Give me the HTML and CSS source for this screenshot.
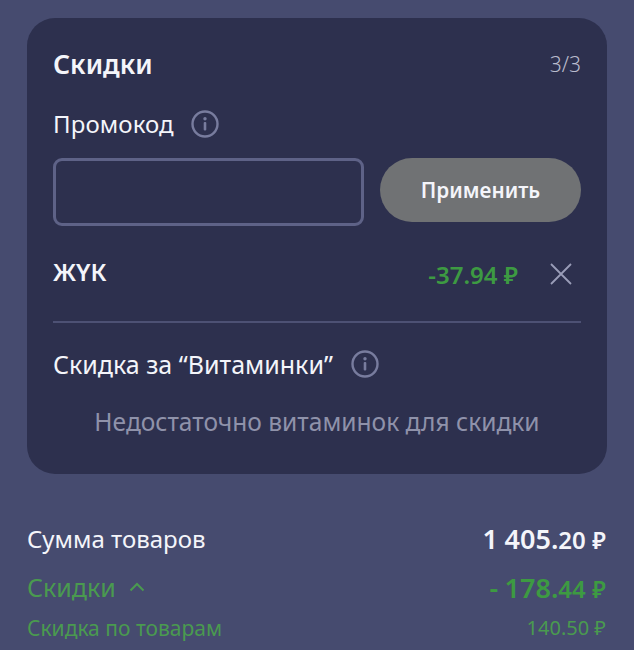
FILE: index.html
```html
<!DOCTYPE html>
<html lang="ru">
<head>
<meta charset="utf-8">
<title>Скидки</title>
<link rel="stylesheet" href="styles.css">
</head>
<body>
<main class="page">
  <section class="card">
    <div class="head">
      <h2 class="title">Скидки</h2>
      <span class="step">3/3</span>
    </div>
    <div class="label-row promo-label">
      <span class="label">Промокод</span>
      <svg class="info" viewBox="0 0 28 28" width="28" height="28"><circle cx="14" cy="14" r="12.5" fill="none" stroke="#787c9e" stroke-width="2.4"/><circle cx="14" cy="8.8" r="1.7" fill="#787c9e"/><rect x="12.7" y="12" width="2.6" height="8.6" rx="1" fill="#787c9e"/></svg>
    </div>
    <div class="promo-form">
      <input class="promo-input" type="text" aria-label="Промокод">
      <button class="apply" type="button">Применить</button>
    </div>
    <div class="coupon">
      <span class="coupon-name">ЖҮК</span>
      <span class="coupon-value">-37.94 ₽</span>
      <svg class="close" viewBox="0 0 24 24" width="24" height="24"><path d="M2 2 L22 22 M22 2 L2 22" stroke="#9a9db8" stroke-width="1.8" fill="none"/></svg>
    </div>
    <hr class="divider">
    <div class="label-row vit-label">
      <span class="label vit-text">Скидка за “Витаминки”</span>
      <svg class="info" viewBox="0 0 28 28" width="28" height="28"><circle cx="14" cy="14" r="12.5" fill="none" stroke="#787c9e" stroke-width="2.4"/><circle cx="14" cy="8.8" r="1.7" fill="#787c9e"/><rect x="12.7" y="12" width="2.6" height="8.6" rx="1" fill="#787c9e"/></svg>
    </div>
    <p class="note">Недостаточно витаминок для скидки</p>
  </section>
  <section class="totals">
    <div class="row sum">
      <span>Сумма товаров</span>
      <span class="amount">1 405.<span class="cents">20</span> <span class="rub">₽</span></span>
    </div>
    <div class="row discounts">
      <span class="disc-label">Скидки
        <svg class="chev" viewBox="0 0 16 10" width="16" height="10"><path d="M1.5 8.5 L8 2 L14.5 8.5" fill="none" stroke="#4a9a4f" stroke-width="2"/></svg>
      </span>
      <span class="amount">- 178.<span class="cents">44</span> <span class="rub">₽</span></span>
    </div>
    <div class="row sub">
      <span>Скидка по товарам</span>
      <span class="sub-value">140.50 ₽</span>
    </div>
  </section>
</main>
</body>
</html>
```
FILE: styles.css
```css
* { box-sizing: border-box; }
html, body { margin: 0; height: 100%; }
body {
  background: #464b6f;
  font-family: "Noto Sans", "Open Sans", sans-serif;
  color: #f4f5fa;
  overflow: hidden;
}
.page { padding: 18px 27px 0; }
.card {
  background: #2d304e;
  border-radius: 28px;
  height: 456px;
  padding: 26px 26px 0;
}
.head { display: flex; justify-content: space-between; align-items: center; height: 40px; }
.title { margin: 0; font-size: 26.6px; font-weight: 600; line-height: 40px; }
.step { font-size: 21px; font-weight: 300; color: #b9bbcc; }
.label-row { display: flex; align-items: center; gap: 17px; }
.label { font-size: 24px; line-height: 34px; letter-spacing: 0.1px; }
.vit-text { font-size: 25px; letter-spacing: 0; }
.vit-label { gap: 18px; margin-top: 24px; }
.promo-label { margin-top: 23px; }
.promo-form { display: flex; gap: 16px; margin-top: 17px; align-items: flex-start; }
.promo-input {
  width: 311px;
  height: 68px;
  background: transparent;
  border: 3px solid #5e6287;
  border-radius: 9px;
}
.apply {
  flex: 1;
  height: 64px;
  border: 0;
  border-radius: 32px;
  background: #707274;
  color: #f4f5fa;
  font: 600 20.7px "Noto Sans", sans-serif;
}
.coupon { display: flex; align-items: center; margin-top: 29px; height: 38px; }
.coupon-name { font-size: 24px; font-weight: 600; flex: 1; position: relative; top: -3px; }
.coupon-value { font-size: 24px; font-weight: 600; color: #3d9a42; }
.close { margin-left: 31px; margin-right: 8px; }
.divider { border: 0; height: 2px; background: #4d5174; margin: 28px 0 0; }
.note { margin: 24px 0 0; font-size: 24.55px; line-height: 34px; color: #8f92aa; text-align: center; }
.totals { margin-top: 46px; margin-right: 1px; }
.row { display: flex; justify-content: space-between; align-items: center; }
.sum { font-size: 24px; height: 36px; }
.amount { font-weight: 600; font-size: 27px; word-spacing: -0.5px; }
.discounts { color: #4a9a4f; font-size: 25px; height: 36px; margin-top: 13px; }
.discounts .amount { color: #3d9a42; }
.cents { font-size: 24px; }
.rub { font-size: 23px; }
.disc-label { display: flex; align-items: center; gap: 13px; }
.chev { margin-top: 0; }
.sub { font-size: 21px; color: #4a9a4f; margin-top: 9px; line-height: 28px; }
.sub-value { font-size: 20px; }
```
